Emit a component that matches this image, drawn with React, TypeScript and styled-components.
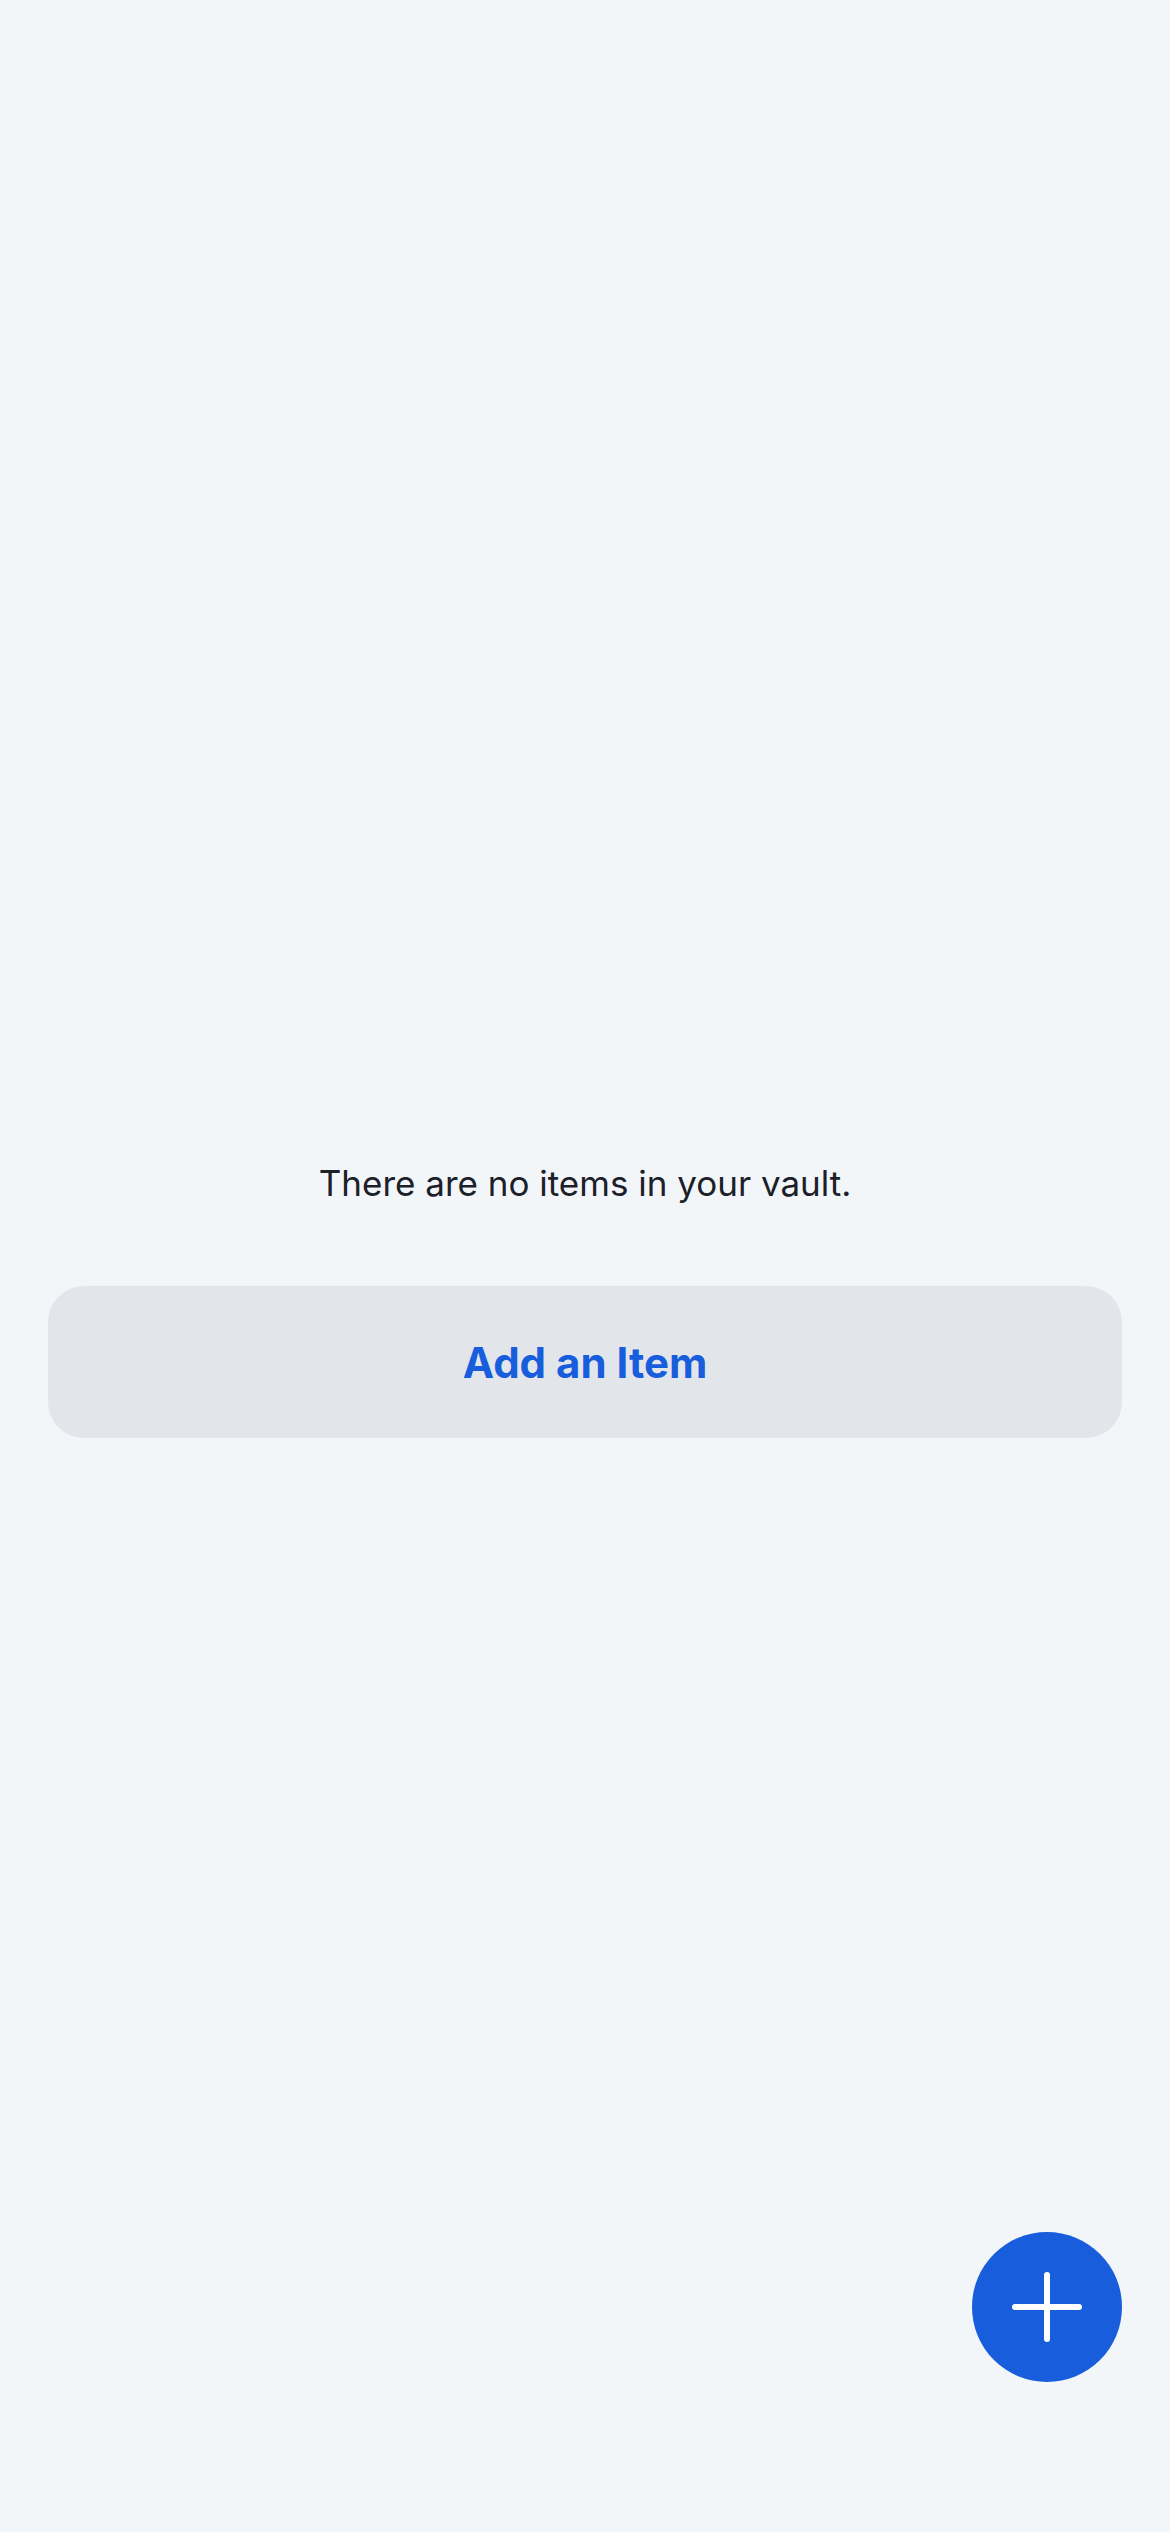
import styled, { createGlobalStyle } from "styled-components";

const GlobalStyle = createGlobalStyle`
  html, body {
    margin: 0;
    padding: 0;
    background-color: #f3f6f9;
  }
  * {
    box-sizing: border-box;
  }
`;

const Screen = styled.div`
  position: relative;
  width: 1170px;
  height: 2532px;
  overflow: hidden;

  background-color: #f3f6f9;
  font-family: Inter, "Noto Sans", sans-serif;
`;

const EmptyState = styled.div`
  display: flex;
  flex-direction: column;
  align-items: center;
  gap: 79px;

  padding: 1159px 48px 0;
`;

const Message = styled.p`
  margin: 0;

  font-size: 35px;
  line-height: 48px;
  font-weight: 400;
  color: #1b2029;
  letter-spacing: 0;
`;

const AddButton = styled.button`
  width: 100%;
  height: 152px;

  display: flex;
  align-items: center;
  justify-content: center;

  background-color: #e2e6ea;
  border: none;
  border-radius: 36px;

  font-family: Inter, "Noto Sans", sans-serif;
  font-size: 42px;
  font-weight: 700;
  color: #175ddc;
  letter-spacing: 0;
`;

const Fab = styled.button`
  position: absolute;
  right: 48px;
  bottom: 150px;

  width: 150px;
  height: 150px;

  display: flex;
  align-items: center;
  justify-content: center;

  background-color: #175ddc;
  border: none;
  border-radius: 50%;
  padding: 0;
`;

const PlusIcon = () => (
  <svg width="72" height="72" viewBox="0 0 72 72" fill="none">
    <path
      d="M36 4v64M4 36h64"
      stroke="#ffffff"
      strokeWidth="6"
      strokeLinecap="round"
    />
  </svg>
);

const App = () => {
  return (
    <Screen>
      <GlobalStyle />
      <EmptyState>
        <Message>There are no items in your vault.</Message>
        <AddButton>Add an Item</AddButton>
      </EmptyState>
      <Fab aria-label="Add item">
        <PlusIcon />
      </Fab>
    </Screen>
  );
};

export default App;
